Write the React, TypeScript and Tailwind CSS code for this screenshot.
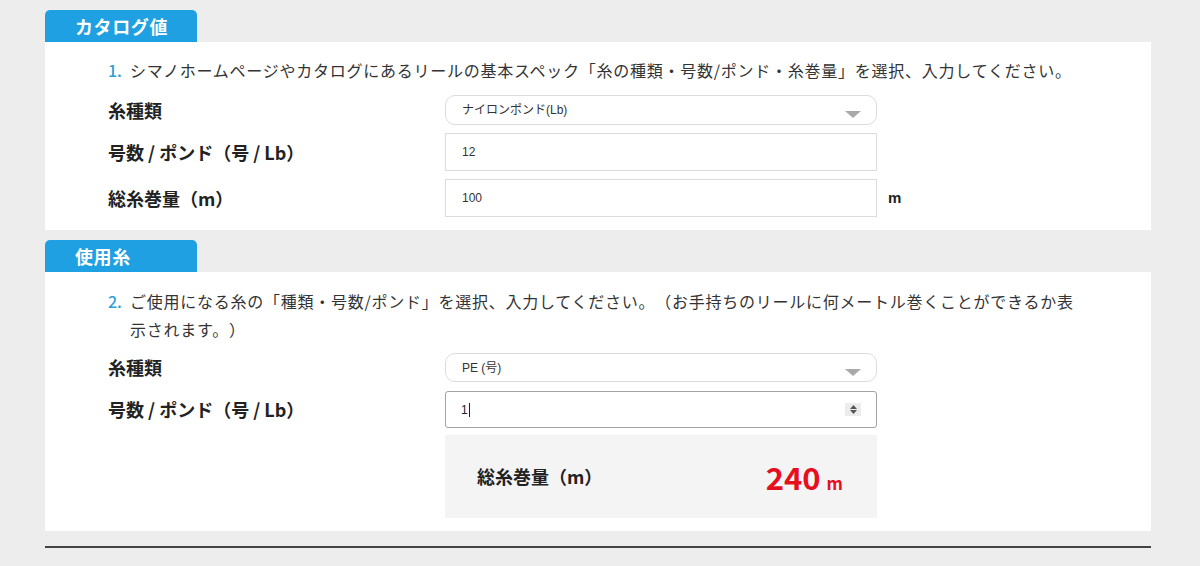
import { ReactNode } from "react";

const jp = "font-['Noto_Sans_CJK_JP','Noto_Sans',sans-serif]";
const small = "font-['Liberation_Sans','Noto_Sans_CJK_JP',sans-serif]";

// blue tab sitting on top of each panel
const Tab = ({ children }: { children: ReactNode }) => (
  <div className="w-[152px] h-[32px] rounded-t-[5px] bg-[#1ea0e2] pl-[30px] text-[18px] leading-[32px] font-bold tracking-[0.6px] text-white">
    {children}
  </div>
);

const Lead = ({ num, children }: { num: string; children: ReactNode }) => (
  <div className="flex text-[16px] leading-[28px] text-[#333] tracking-[0.75px] [text-spacing-trim:space-all]">
    <span className="w-[22px] shrink-0 font-medium text-[#2a9fd8] tracking-normal">{num}</span>
    <p className="w-[950px]">{children}</p>
  </div>
);

const Row = ({ label, children }: { label: string; children: ReactNode }) => (
  <div className="flex items-center">
    <div className="w-[337px] shrink-0 text-[18px] font-bold text-[#222]">{label}</div>
    {children}
  </div>
);

const Select = ({ value, h }: { value: string; h: string }) => (
  <div
    className={`relative flex w-[432px] ${h} items-center rounded-[10px] border border-[#dcdcdc] bg-white pl-[16px] text-[12px] text-[#333] ${small}`}
  >
    {value}
    <svg className="absolute right-[15px] top-1/2 mt-[1px]" width="16" height="7" viewBox="0 0 16 7">
      <polygon points="0,0 16,0 8,7" fill="#a9a9a9" />
    </svg>
  </div>
);

const Input = ({ value }: { value: string }) => (
  <div className={`flex w-[432px] h-[38px] items-center border border-[#dcdcdc] bg-white pl-[16px] text-[12px] text-[#333] ${small}`}>
    {value}
  </div>
);

export default function App() {
  return (
    <div className={`min-h-[566px] w-[1200px] bg-[#ededed] pt-[10px] ${jp}`}>
      <div className="ml-[45px] w-[1106px]">
        <Tab>カタログ値</Tab>
        <div className="bg-white pl-[63px] pt-[14px] pb-[13px]">
          <Lead num="1.">
            シマノホームページやカタログにあるリールの基本スペック「糸の種類・号数/ポンド・糸巻量」を選択、入力してください。
          </Lead>
          <div className="mt-[11px] flex flex-col gap-[8px]">
            <Row label="糸種類">
              <Select value="ナイロンポンド(Lb)" h="h-[30px]" />
            </Row>
            <Row label="号数 / ポンド（号 / Lb）">
              <Input value="12" />
            </Row>
            <Row label="総糸巻量（m）">
              <Input value="100" />
              <span className={`ml-[11px] text-[15px] font-bold text-[#222] ${small}`}>m</span>
            </Row>
          </div>
        </div>

        <div className="mt-[10px]">
          <Tab>使用糸</Tab>
        </div>
        <div className="bg-white pl-[63px] pt-[15px] pb-[13px]">
          <Lead num="2.">
            ご使用になる糸の「種類・号数/ポンド」を選択、入力してください。（お手持ちのリールに何メートル巻くことができるか表示されます。）
          </Lead>
          <div className="mt-[10px] flex flex-col gap-[9px]">
            <Row label="糸種類">
              <Select value="PE (号)" h="h-[29px]" />
            </Row>
            <Row label="号数 / ポンド（号 / Lb）">
              <div
                className={`relative flex w-[432px] h-[37px] items-center rounded-[3px] border-[1.5px] border-[#a3a3a3] bg-white pl-[15px] text-[12px] text-[#222] ${small}`}
              >
                1<span className="ml-[1px] inline-block h-[14px] w-[1px] bg-[#222]" />
                <div className="absolute right-[15px] top-[11px] flex h-[13px] w-[16px] flex-col items-center justify-center gap-[1px] bg-[#ececec]">
                  <svg width="7" height="4" viewBox="0 0 7 4">
                    <polygon points="3.5,0 7,4 0,4" fill="#555" />
                  </svg>
                  <svg width="7" height="4" viewBox="0 0 7 4">
                    <polygon points="0,0 7,0 3.5,4" fill="#555" />
                  </svg>
                </div>
              </div>
            </Row>
          </div>
          <div className="ml-[337px] mt-[7px] flex h-[83px] w-[432px] items-center justify-between bg-[#f4f4f4] pl-[32px] pr-[34px]">
            <span className="text-[18px] font-bold text-[#222]">総糸巻量（m）</span>
            <span className="flex items-baseline text-[#e60f1e] font-bold">
              <span className="text-[31px] leading-none">240</span>
              <span className="ml-[6px] text-[17px] leading-none">m</span>
            </span>
          </div>
        </div>

        <div className="mt-[15px] h-[2px] bg-[#444]" />
      </div>
    </div>
  );
}
